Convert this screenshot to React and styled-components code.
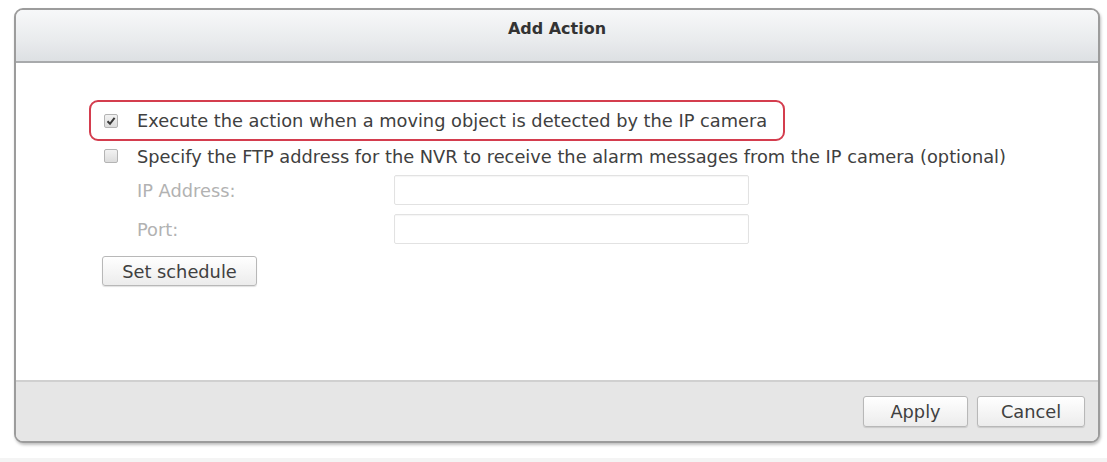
import React from "react";
import styled, { createGlobalStyle } from "styled-components";

const Global = createGlobalStyle`
  html, body { margin: 0; padding: 0; background: #ffffff; }
  body { font-family: "DejaVu Sans", Verdana, sans-serif; }
  * { box-sizing: border-box; }
`;

const Page = styled.div`
  width: 1107px;
  height: 462px;
  padding: 8px 0 0 14px;
  background: #ffffff;
  border-bottom: 4px solid #f4f4f4;
`;

const Dialog = styled.div`
  width: 1086px;
  height: 435px;
  border: 2px solid #9c9c9c;
  border-radius: 9px;
  overflow: hidden;
  display: flex;
  flex-direction: column;
  background: #ffffff;
  box-shadow: 1px 2px 3px rgba(0, 0, 0, 0.25);
`;

const Header = styled.div`
  height: 53px;
  flex: none;
  background: linear-gradient(#f7f8f9, #e9ebed 60%, #dde0e3);
  border-bottom: 2px solid #a8aaac;
  display: flex;
  justify-content: center;
  padding-top: 9px;
`;

const Title = styled.div`
  font-size: 16px;
  font-weight: bold;
  color: #333333;
`;

const Body = styled.div`
  flex: 1;
  padding: 37px 0 0 73px;
  display: flex;
  flex-direction: column;
  align-items: flex-start;
`;

const Highlight = styled.div`
  width: 696px;
  height: 41px;
  border: 2px solid #d43d4e;
  border-radius: 9px;
  display: flex;
  align-items: center;
  padding-left: 13px;
`;

const Row = styled.div`
  height: 30px;
  display: flex;
  align-items: center;
  padding-left: ${(p) => (p.$inset ? "15px" : "0")};
`;

const Box = styled.span`
  width: 14px;
  height: 14px;
  flex: none;
  border: 1px solid #b4b4b4;
  border-radius: 2px;
  background: linear-gradient(#f2f2f2, #dcdcdc);
  display: inline-flex;
  align-items: center;
  justify-content: center;
  margin-right: 19px;
`;

const Label = styled.span`
  font-size: 17.8px;
  color: #404040;
  white-space: nowrap;
`;

const Fields = styled.div`
  display: grid;
  grid-template-columns: 257px 355px;
  row-gap: 9px;
  margin: 4px 0 0 48px;
  align-items: center;
`;

const FieldLabel = styled.span`
  font-size: 17.8px;
  color: #b2b2b2;
`;

const Input = styled.div`
  height: 30px;
  border: 1px solid #e2e2e2;
  border-radius: 2px;
  background: #ffffff;
  box-shadow: inset 0 1px 1px rgba(0, 0, 0, 0.04);
`;

const Button = styled.button`
  height: ${(p) => p.$h || 30}px;
  width: ${(p) => p.$w}px;
  border: 1px solid #b8b8b8;
  border-radius: 3px;
  background: linear-gradient(#ffffff, #ececec);
  box-shadow: 0 1px 1px rgba(0, 0, 0, 0.12);
  font-family: "DejaVu Sans", Verdana, sans-serif;
  font-size: 17.8px;
  color: #404040;
  padding: 0;
`;

const ScheduleButton = styled(Button)`
  margin: 12px 0 0 13px;
`;

const Footer = styled.div`
  height: 61px;
  flex: none;
  background: #e6e6e6;
  border-top: 2px solid #d0d0d0;
  display: flex;
  justify-content: flex-end;
  align-items: flex-start;
  gap: 9px;
  padding: 14px 13px 0 0;
`;

const Check = () => (
  <svg width="10" height="10" viewBox="0 0 10 10">
    <path d="M1.5 5.2 L4 7.8 L8.6 1.8" fill="none" stroke="#3a3a3a" strokeWidth="2" />
  </svg>
);

export default function App() {
  return (
    <>
      <Global />
      <Page>
        <Dialog>
          <Header>
            <Title>Add Action</Title>
          </Header>
          <Body>
            <Highlight>
              <Box>
                <Check />
              </Box>
              <Label>Execute the action when a moving object is detected by the IP camera</Label>
            </Highlight>
            <Row $inset>
              <Box />
              <Label>
                Specify the FTP address for the NVR to receive the alarm messages from the IP camera (optional)
              </Label>
            </Row>
            <Fields>
              <FieldLabel>IP Address:</FieldLabel>
              <Input />
              <FieldLabel>Port:</FieldLabel>
              <Input />
            </Fields>
            <ScheduleButton $w={155}>Set schedule</ScheduleButton>
          </Body>
          <Footer>
            <Button $w={105} $h={31}>Apply</Button>
            <Button $w={108} $h={31}>Cancel</Button>
          </Footer>
        </Dialog>
      </Page>
    </>
  );
}
